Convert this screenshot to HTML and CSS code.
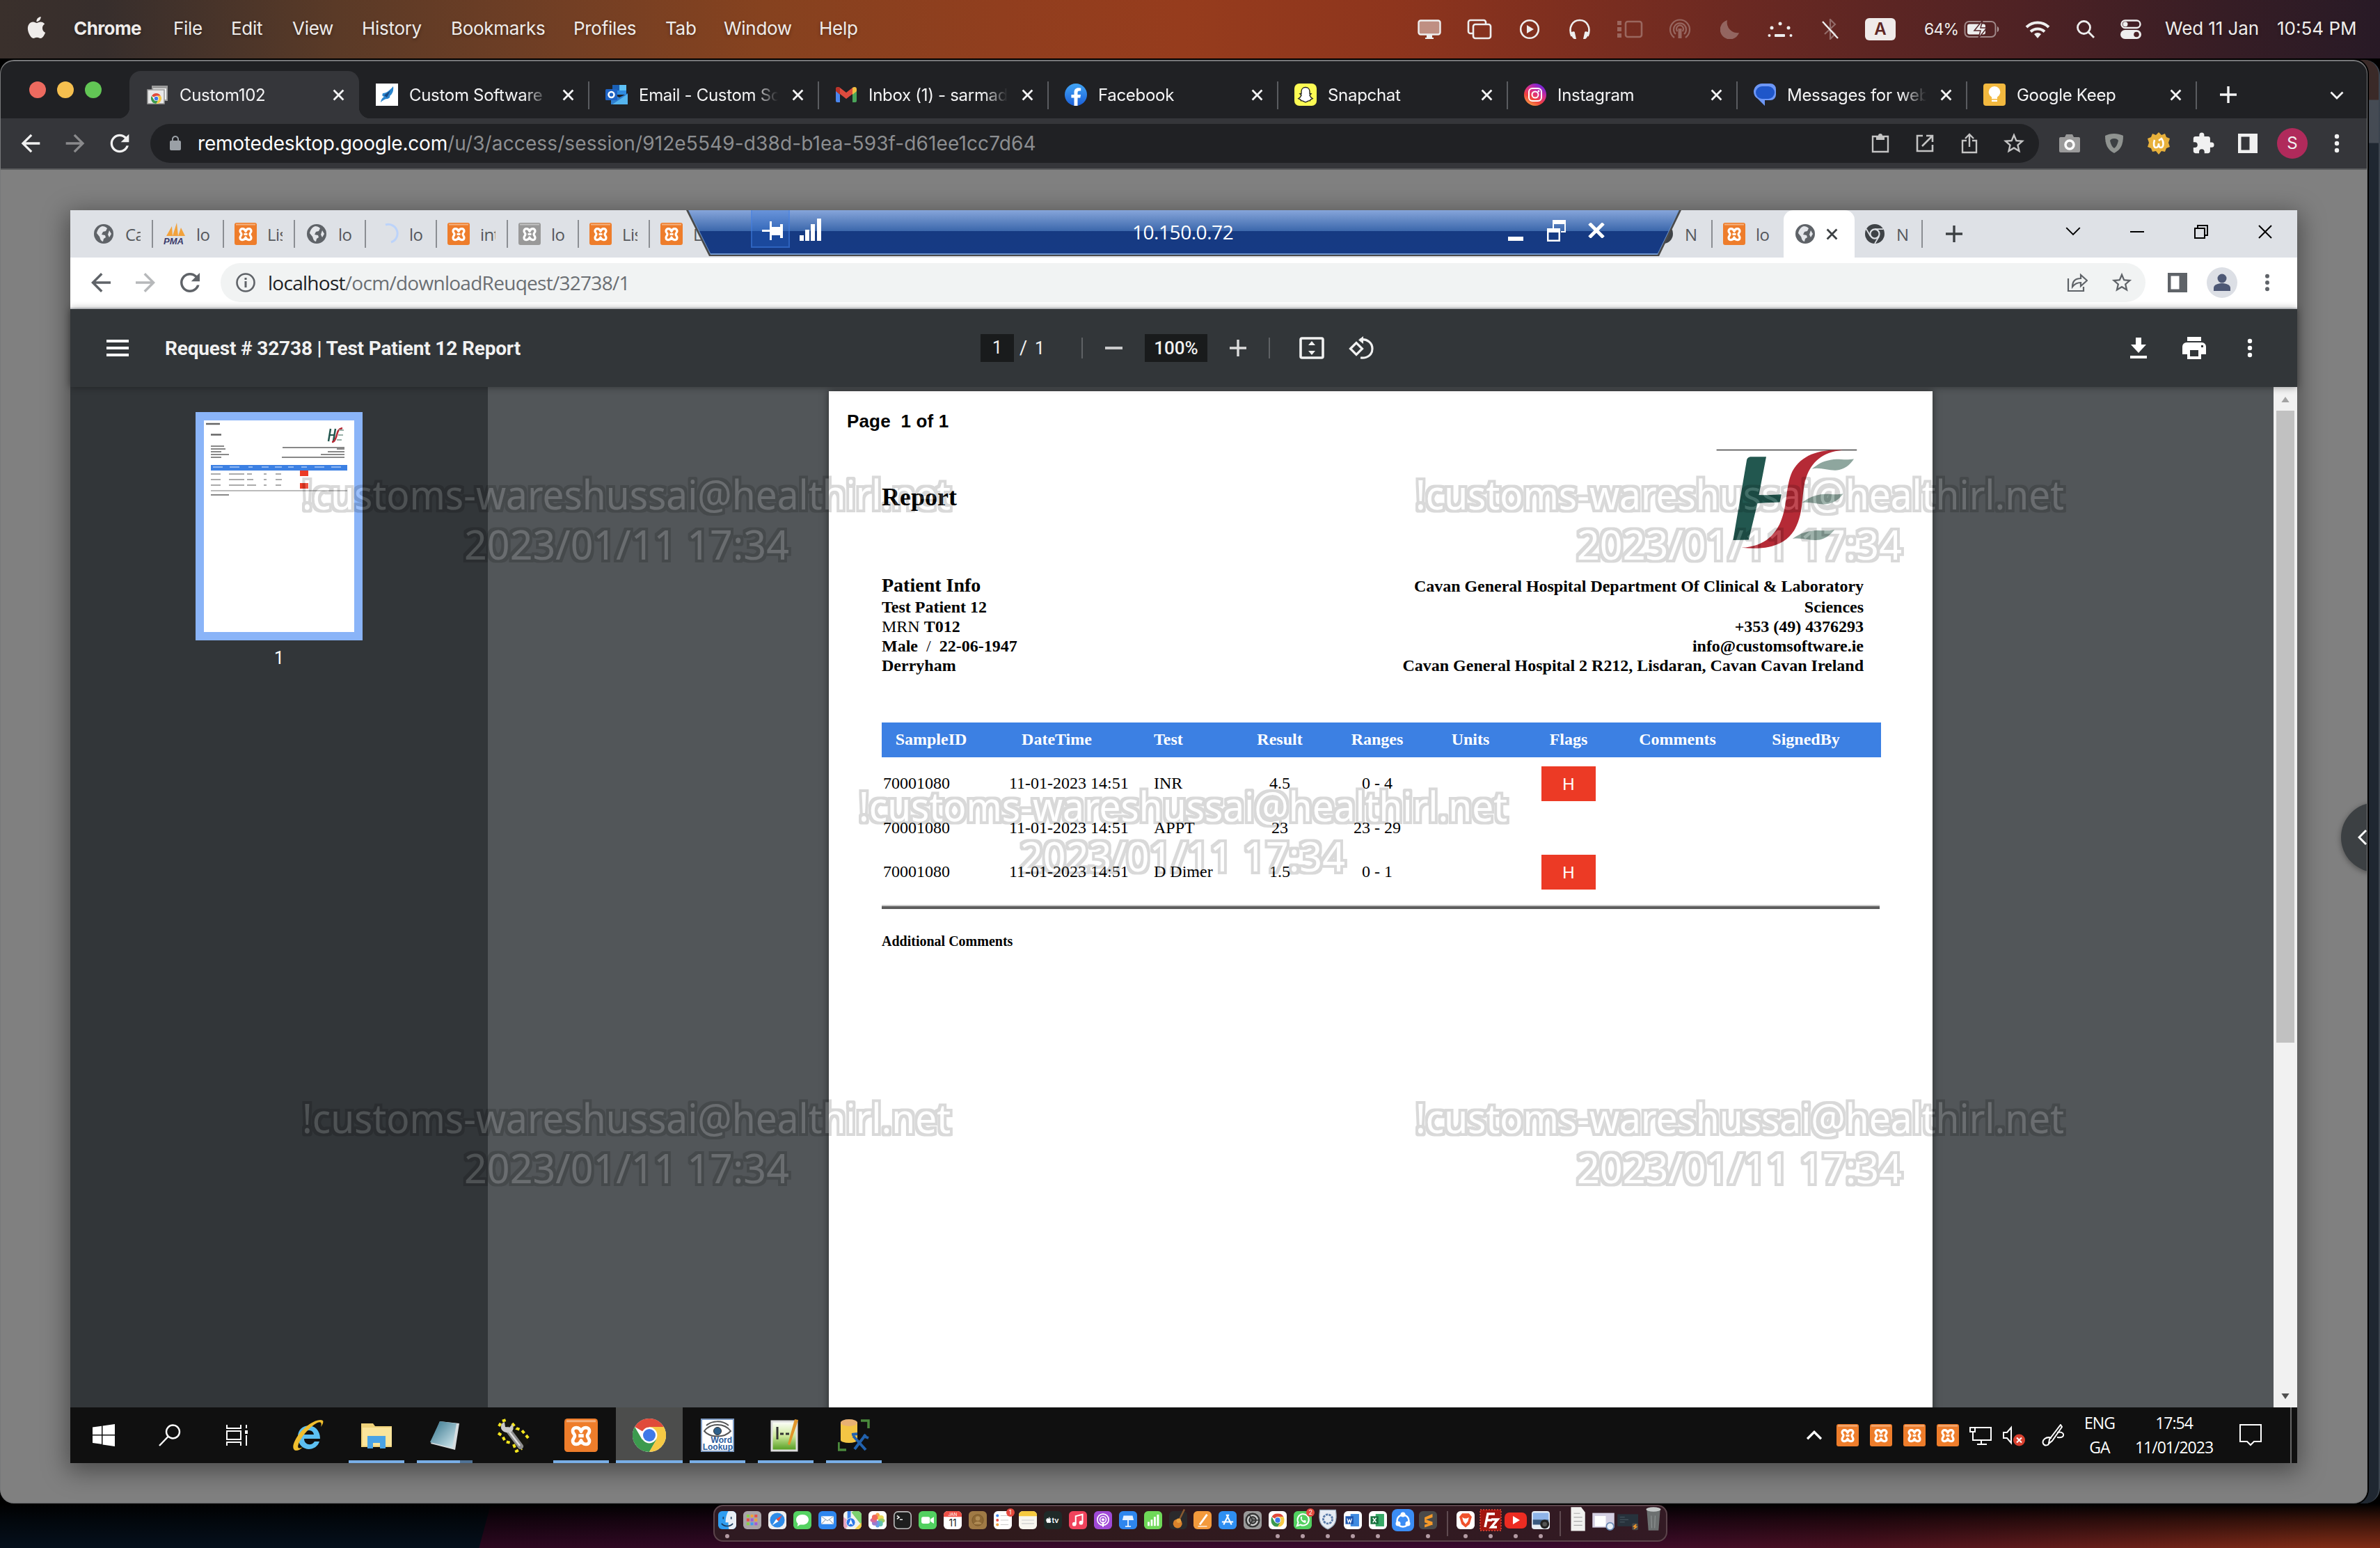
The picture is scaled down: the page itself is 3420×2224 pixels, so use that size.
FILE: index.html
```html
<!DOCTYPE html>
<html lang="en">
<head>
<meta charset="utf-8">
<title>Custom102</title>
<link rel="stylesheet" href="styles.css">
</head>
<body>
<svg class="defs" width="0" height="0">
  <defs>
    <linearGradient id="g-fb" x1="0" y1="0" x2="0" y2="1"><stop offset="0" stop-color="#41a5f5"/><stop offset="1" stop-color="#1b5fd8"/></linearGradient>
    <linearGradient id="g-ig" x1="0" y1="1" x2=".6" y2="0"><stop offset="0" stop-color="#fdc14a"/><stop offset=".4" stop-color="#f0433c"/><stop offset=".7" stop-color="#d62f8f"/><stop offset="1" stop-color="#7a25d8"/></linearGradient>
    <linearGradient id="g-np" x1="0" y1="0" x2="1" y2="1"><stop offset="0" stop-color="#2e7088"/><stop offset="1" stop-color="#d9edf3"/></linearGradient>
    <linearGradient id="g-npp" x1="0" y1="0" x2="0" y2="1"><stop offset="0" stop-color="#fff"/><stop offset=".5" stop-color="#cde89a"/><stop offset="1" stop-color="#4f9a1c"/></linearGradient>
    <filter id="emboss" filterUnits="userSpaceOnUse" x="101" y="302" width="3200" height="1800" color-interpolation-filters="sRGB">
      <feMorphology in="SourceAlpha" operator="dilate" radius="3.5" result="fat"/>
      <feComposite in="fat" in2="SourceAlpha" operator="out" result="ring"/>
      <feFlood flood-color="#000" flood-opacity=".15"/><feComposite in2="ring" operator="in" result="edge"/>
      <feFlood flood-color="#fff" flood-opacity=".14"/><feComposite in2="SourceAlpha" operator="in" result="core"/>
      <feMerge><feMergeNode in="edge"/><feMergeNode in="core"/></feMerge>
    </filter>
  </defs>
  <symbol id="back" viewBox="0 0 24 24"><path d="M20 11H7.83l5.59-5.59L12 4l-8 8 8 8 1.41-1.41L7.83 13H20z"/></symbol>
  <symbol id="fwd" viewBox="0 0 24 24"><path d="M4 11h12.17l-5.59-5.59L12 4l8 8-8 8-1.41-1.41L16.17 13H4z"/></symbol>
  <symbol id="reload" viewBox="0 0 24 24"><path d="M17.65 6.35C16.2 4.9 14.21 4 12 4c-4.42 0-7.99 3.58-7.99 8s3.57 8 7.99 8c3.73 0 6.84-2.55 7.73-6h-2.08c-.82 2.33-3.04 4-5.65 4-3.31 0-6-2.69-6-6s2.69-6 6-6c1.66 0 3.14.69 4.22 1.78L13 11h7V4z"/></symbol>
  <symbol id="lock" viewBox="0 0 24 24"><path d="M18 8h-1V6c0-2.76-2.24-5-5-5S7 3.24 7 6v2H6c-1.1 0-2 .9-2 2v10c0 1.1.9 2 2 2h12c1.1 0 2-.9 2-2V10c0-1.1-.9-2-2-2zM8.9 6c0-1.71 1.39-3.1 3.1-3.1s3.1 1.39 3.1 3.1v2H8.9z"/></symbol>
  <symbol id="star" viewBox="0 0 24 24"><path d="M22 9.24l-7.19-.62L12 2 9.19 8.63 2 9.24l5.46 4.73L5.82 21 12 17.27 18.18 21l-1.63-7.03zM12 15.4l-3.76 2.27 1-4.28-3.32-2.88 4.38-.38L12 6.1l1.71 4.04 4.38.38-3.32 2.88 1 4.28z"/></symbol>
  <symbol id="x" viewBox="0 0 16 16"><path d="M1.5 1.5l13 13M14.5 1.5l-13 13" fill="none" stroke="currentColor" stroke-width="2.6"/></symbol>
  <symbol id="xthin" viewBox="0 0 20 20"><path d="M1 1l18 18M19 1L1 19" fill="none" stroke="currentColor" stroke-width="2"/></symbol>
  <symbol id="plus" viewBox="0 0 24 24"><path d="M12 0v24M0 12h24" fill="none" stroke="currentColor" stroke-width="3.4"/></symbol>
  <symbol id="chev" viewBox="0 0 20 12"><path d="M1.5 1.5L10 10l8.500-8.500" fill="none" stroke="currentColor" stroke-width="2.800"/></symbol>
  <symbol id="chevthin" viewBox="0 0 20 12"><path d="M1 1l9 9 9-9" fill="none" stroke="currentColor" stroke-width="1.800"/></symbol>
  <symbol id="dots" viewBox="0 0 8 28"><circle cx="4" cy="4" r="3.200"/><circle cx="4" cy="14" r="3.200"/><circle cx="4" cy="24" r="3.200"/></symbol>
  <symbol id="apple" viewBox="0 0 24 24"><path d="M12.152 6.896c-.948 0-2.415-1.078-3.96-1.04-2.04.027-3.91 1.183-4.961 3.014-2.117 3.675-.546 9.103 1.519 12.09 1.013 1.454 2.208 3.09 3.792 3.039 1.52-.065 2.09-.987 3.935-.987 1.831 0 2.35.987 3.96.948 1.637-.026 2.676-1.48 3.676-2.948 1.156-1.688 1.636-3.325 1.662-3.415-.039-.013-3.182-1.221-3.22-4.857-.026-3.04 2.48-4.494 2.597-4.559-1.429-2.09-3.623-2.324-4.39-2.376-2-.156-3.675 1.09-4.61 1.09zM15.53 3.83c.843-1.012 1.4-2.427 1.245-3.83-1.207.052-2.662.805-3.532 1.818-.78.896-1.454 2.338-1.273 3.714 1.338.104 2.715-.688 3.559-1.701"/></symbol>
  <symbol id="xampp" viewBox="0 0 32 32"><rect width="32" height="32" rx="3" class="xb"/><rect x="2" y="1.500" width="28" height="2" fill="#fff" opacity=".4"/><path d="M16 12.500C14.500 7.500 8 7.500 8 12c0 2.500 2 2.500 2 4.500S8 19 8 21.500c0 4.500 6.500 4 8-.500 1.500 4.500 8 5 8 .500 0-2.500-2-3-2-5s2-2 2-4.500c0-4.500-6.500-4.500-8 .500zM13.500 16.500h5" fill="none" stroke="#fff" stroke-width="3.200" stroke-linejoin="round"/></symbol>
  <symbol id="globe" viewBox="0 0 28 28"><circle cx="14" cy="14" r="14" class="gb"/><path d="M12 3c3 0 5 1 7 3l-2 4-4 1-2 4 5 1 1 3-3 2-1 4c-4-1-4-5-5-7L4 13c1-5 4-9 8-10zM22 9l3 5-3 5-2-4z" class="gl"/></symbol>
  <symbol id="chrome" viewBox="0 0 32 32"><circle cx="16" cy="16" r="16" fill="#fff"/><path d="M16 16L2.140 8A16 16 0 0 1 29.860 8H16z" fill="#e04a3a"/><path d="M2.140 8A16 16 0 0 0 16 32l7-12-7-4-6.900 4z" fill="#3c9a4e"/><path d="M29.860 8A16 16 0 0 1 16 32l6.900-12L16 8z" fill="#f6c944"/><circle cx="16" cy="16" r="7.600" fill="#fff"/><circle cx="16" cy="16" r="6" fill="#3f79e8"/></symbol>
  <symbol id="chromeg" viewBox="0 0 32 32"><circle cx="16" cy="16" r="16" fill="#3f4347"/><path d="M16 8h14M9 20L2 8M23 20l-7 12" stroke="#dee1e6" stroke-width="2"/><circle cx="16" cy="16" r="7.500" fill="#3f4347" stroke="#dee1e6" stroke-width="2.500"/></symbol>
  <symbol id="side" viewBox="0 0 28 28"><path d="M0 0h28v28H0zM4.500 4.500v19h12v-19z" fill-rule="evenodd"/></symbol>
</svg>

<header class="menubar">
  <svg class="apple"><use href="#apple"/></svg>
  <nav class="menus"><b>Chrome</b><span>File</span><span>Edit</span><span>View</span><span>History</span><span>Bookmarks</span><span>Profiles</span><span>Tab</span><span>Window</span><span>Help</span></nav>
  <div class="status">
    <i><svg width="36" height="30" viewBox="0 0 36 30"><rect x="2.500" y="2.500" width="31" height="20" rx="3" fill="#fff" fill-opacity=".45" stroke="#eee" stroke-width="2.400"/><path d="M14 23h8v4h2v2H12v-2h2z" fill="#eee"/></svg></i>
    <i><svg width="36" height="30" viewBox="0 0 36 30" fill="none" stroke="#eee" stroke-width="2.600"><path d="M8 21H5a3 3 0 0 1-3-3V5a3 3 0 0 1 3-3h19a3 3 0 0 1 3 3v2"/><rect x="9" y="8" width="25" height="20" rx="3"/></svg></i>
    <i><svg width="30" height="30" viewBox="0 0 30 30"><circle cx="15" cy="15" r="12.800" fill="none" stroke="#eee" stroke-width="2.600"/><path d="M11 9l10 6-10 6z" fill="#eee"/></svg></i>
    <i><svg width="30" height="30" viewBox="0 0 30 30"><path d="M3.500 25C-2 12 5 2 15 2s17 10 11.500 23" fill="none" stroke="#eee" stroke-width="2.600"/><path d="M3 19c3-1 5-1 5 1l2 9H7c-3-2-5-6-4-10zM27 19c-3-1-5-1-5 1l-2 9h3c3-2 5-6 4-10z" fill="#eee"/></svg></i>
    <i class="dim"><svg width="38" height="26" viewBox="0 0 38 26"><rect x="13" y="2" width="23" height="22" rx="3" fill="none" stroke="#eee" stroke-width="2.600"/><path d="M1 1h6v6H1zM1 10h6v6H1zM1 19h6v6H1z" fill="#eee"/></svg></i>
    <i class="dim"><svg width="32" height="30" viewBox="0 0 32 30" fill="none" stroke="#eee" stroke-width="2.200"><path d="M8 27a14 14 0 1 1 16 0M10 22a9 9 0 1 1 12 0M12.500 18a5 5 0 1 1 7 0"/><path d="M16 14v14" stroke-width="5"/></svg></i>
    <i class="dim"><svg width="28" height="28" viewBox="0 0 28 28"><path d="M10 1a14 14 0 1 0 17 18A15 15 0 0 1 10 1z" fill="#eee"/></svg></i>
    <i><svg width="36" height="24" viewBox="0 0 36 24" fill="#eee"><circle cx="18" cy="4" r="2.500"/><circle cx="6" cy="10" r="2.500"/><circle cx="30" cy="10" r="2.500"/><circle cx="2.500" cy="21" r="2"/><circle cx="33.500" cy="21" r="2"/><rect x="10" y="19" width="15" height="4" rx="1"/></svg></i>
    <i><svg width="26" height="30" viewBox="0 0 26 30" fill="none"><path d="M5 8l15 14-7 7V1l7 7L5 22" stroke="#eee" stroke-opacity=".35" stroke-width="2.200"/><path d="M2 4l22 24" stroke="#eee" stroke-width="2.400"/></svg></i>
    <i><span class="kbd">A</span></i>
    <span class="pct">64%</span>
    <svg class="batt" width="52" height="26" viewBox="0 0 52 26"><rect x="1.500" y="2" width="44" height="22" rx="6" fill="none" stroke="#eee" stroke-opacity=".5" stroke-width="2"/><path d="M48 9c3 1 3 7 0 8z" fill="#eee" fill-opacity=".6"/><rect x="5" y="5.500" width="26" height="15" rx="3" fill="#eee"/><path d="M27 0L15 15h9l-3 11 12-15h-9z" fill="#eee" stroke="#54262a" stroke-width="1.500"/></svg>
    <svg class="wifi" width="36" height="27" viewBox="0 0 36 27" fill="none" stroke="#eee" stroke-width="4"><path d="M2 10a23 23 0 0 1 32 0M8 16.500a14.500 14.500 0 0 1 20 0"/><path d="M18 26l-5-6a7 7 0 0 1 10 0z" fill="#eee" stroke="none"/></svg>
    <svg class="find" width="28" height="28" viewBox="0 0 28 28" fill="none" stroke="#eee" stroke-width="2.800"><circle cx="11.500" cy="11.500" r="9"/><path d="M18 18l8 8"/></svg>
    <svg class="cc" width="30" height="28" viewBox="0 0 30 28"><rect x="1.500" y="1.500" width="27" height="10.500" rx="5.200" fill="none" stroke="#eee" stroke-width="2.400"/><circle cx="7" cy="6.700" r="3.500" fill="#eee"/><rect y="15" width="30" height="13" rx="6.500" fill="#eee"/><circle cx="23" cy="21.500" r="3.800" fill="#4a2226"/></svg>
    <span class="date">Wed 11 Jan</span><span class="time">10:54 PM</span>
  </div>
</header>

<div class="behind"></div>
<main class="win">
  <div class="tabs">
    <div class="lights"><i class="r"></i><i class="y"></i><i class="g"></i></div>
    <div class="tab on"><svg class="fav" viewBox="0 0 32 32"><path d="M8 3h23v22H8z" fill="#9b9b9b"/><path d="M10 7h19v16H10z" fill="#eee"/><path d="M2 9h24v20H2z" fill="#e8e8e8" stroke="#999" stroke-width="1.500"/><svg x="7" y="14" width="15" height="15"><use href="#chrome"/></svg></svg><span>Custom102</span><svg class="x"><use href="#x"/></svg></div>
    <div class="tab"><svg class="fav" viewBox="0 0 32 32"><path d="M0 0h32v32H0z" fill="#fff"/><path d="M7 27c1-5 3-7 5-8-3-1-3-2-2-5 5 0 10-4 15-10 1 6-1 11-5 14 1 1 0 3-3 4-4 0-7 2-10 5z" fill="#2b86cf"/><path d="M12 17l9-7-5 10z" fill="#174a86"/></svg><span>Custom Software</span><svg class="x"><use href="#x"/></svg></div>
    <div class="tab"><svg class="fav" viewBox="0 0 32 32"><path d="M10 2h20v14H10z" fill="#2f8be0"/><path d="M20 2h10v8H20z" fill="#5ec1f5"/><path d="M10 2h10v8H10z" fill="#1a5fb4"/><path d="M8 14l12 6 12-6v16H8z" fill="#2f7fd0"/><path d="M32 15v15H10z" fill="#55b4ee"/><rect y="8" width="17" height="16" rx="1.500" fill="#1f63c4"/><circle cx="8.500" cy="16" r="4" fill="none" stroke="#fff" stroke-width="2.500"/></svg><span>Email - Custom So</span><svg class="x"><use href="#x"/></svg></div>
    <div class="tab"><svg class="fav" viewBox="0 0 32 32"><path d="M1 8h6v19H3a2 2 0 0 1-2-2z" fill="#4b86ee"/><path d="M25 8h6v17a2 2 0 0 1-2 2h-4z" fill="#4aa55a"/><path d="M1 8c0-3 3-4 6-2l9 7 9-7v9l-9 7-9-7-6-5z" fill="#dd4b3e"/><path d="M25 6c3-2 6-1 6 2v3l-6 5z" fill="#f2bd42"/><path d="M1 8c0-3 3-4 6-2v10l-6-5z" fill="#b83229"/></svg><span>Inbox (1) - sarmad</span><svg class="x"><use href="#x"/></svg></div>
    <div class="tab"><svg class="fav" viewBox="0 0 32 32"><circle cx="16" cy="16" r="16" fill="url(#g-fb)"/><path d="M13.500 32V20.600H9.400V16h4.100v-3.500c0-4 2.400-6.300 6.100-6.300 1.800 0 3.600.3 3.600.3v4h-2c-2 0-2.700 1.200-2.700 2.500v3h4.500l-.7 4.600h-3.800V32z" fill="#fff"/></svg><span>Facebook</span><svg class="x"><use href="#x"/></svg></div>
    <div class="tab"><svg class="fav" viewBox="0 0 32 32"><rect width="32" height="32" rx="7" fill="#fdfb54"/><path d="M16 5.500c4 0 6 3 6 6v3l2 .2-2 2c1 3 2 4 4 5l-3 1.500-.5 1.500c-3-.5-4 2-6.500 2s-3.500-2.500-6.500-2L9 23.200l-3-1.500c2-1 3-2 4-5l-2-2 2-.2v-3c0-3 2-6 6-6z" fill="#fff" stroke="#222" stroke-width="1.400"/></svg><span>Snapchat</span><svg class="x"><use href="#x"/></svg></div>
    <div class="tab"><svg class="fav" viewBox="0 0 32 32"><circle cx="16" cy="16" r="16" fill="url(#g-ig)"/><g fill="none" stroke="#fff" stroke-width="2"><rect x="7" y="7" width="18" height="18" rx="5"/><circle cx="16" cy="16" r="4.500"/></g><circle cx="21" cy="11" r="1.400" fill="#fff"/></svg><span>Instagram</span><svg class="x"><use href="#x"/></svg></div>
    <div class="tab"><svg class="fav" viewBox="0 0 32 32"><path d="M12 0h12a8 8 0 0 1 8 8v8a8 8 0 0 1-8 8h-8v8L6 22A12 12 0 0 1 0 12 12 12 0 0 1 12 0z" fill="#6d97f6"/><rect x="3" y="4" width="27" height="18" rx="9" fill="#1f56c9"/></svg><span>Messages for web</span><svg class="x"><use href="#x"/></svg></div>
    <div class="tab"><svg class="fav" viewBox="0 0 32 32"><rect width="32" height="32" rx="4" fill="#f3b93f"/><path d="M12 22v-2.500a8.300 8.300 0 1 1 8 0V22zM12 23.500h8V26h-8z" fill="#fff"/></svg><span>Google Keep</span><svg class="x"><use href="#x"/></svg></div>
    <svg class="newtab"><use href="#plus"/></svg>
    <svg class="tabmenu"><use href="#chev"/></svg>
  </div>
  <div class="tools">
    <div class="nav"><svg><use href="#back"/></svg><svg class="off"><use href="#fwd"/></svg><svg><use href="#reload"/></svg></div>
    <div class="omni">
      <svg class="lock"><use href="#lock"/></svg>
      <span class="url">remotedesktop.google.com<em>/u/3/access/session/912e5549-d38d-b1ea-593f-d61ee1cc7d64</em></span>
      <div class="omni-i">
        <i><svg width="26" height="28" viewBox="0 0 26 28"><path d="M2 4h22v22H2z" fill="none" stroke="#c4c4c4" stroke-width="2.400"/><path d="M7 3h3a3 3 0 0 1 6 0h3v6H7z" fill="#c4c4c4"/></svg></i>
        <i><svg width="26" height="28" viewBox="0 0 26 28" fill="none" stroke="#c4c4c4" stroke-width="2.600"><path d="M10 3H2v22h22v-9M15 3h9v9M24 3L9 18"/></svg></i>
        <i><svg width="24" height="32" viewBox="0 0 24 32" fill="none" stroke="#c4c4c4" stroke-width="2.400"><path d="M8 12H2v17h20V12h-6M12 21V3M6 9l6-6 6 6"/></svg></i>
        <i><svg width="36" height="36"><use href="#star"/></svg></i>
      </div>
    </div>
    <div class="exts">
      <i><svg width="32" height="28" viewBox="0 0 32 28"><path d="M3 5h6l2-4h9l2 4h7a2 2 0 0 1 2 2v18a2 2 0 0 1-2 2H3a2 2 0 0 1-2-2V7a2 2 0 0 1 2-2z" fill="#9a9a9a"/><circle cx="16" cy="16" r="6" fill="none" stroke="#fff" stroke-width="3.500"/></svg></i>
      <i><svg width="28" height="30" viewBox="0 0 28 30"><path d="M14 1c5 0 9 1 13 3 0 12-3 20-13 25C4 24 1 16 1 4c4-2 8-3 13-3z" fill="#8f9390"/><path d="M14 8c3 0 5 1 6 3-1 5-3 9-6 11-3-2-5-6-6-11 1-2 3-3 6-3z" fill="#3c4043"/></svg></i>
      <i><svg width="32" height="32" viewBox="0 0 32 32"><path d="M16 0l4 4 5-2 2 5 5 2-2 6 2 6-5 2-2 5-5-1-4 5-4-5-5 1-2-5-5-2 2-6-2-6 5-2 2-5 5 2z" fill="#e8b13c"/><path d="M10 11c-2 6-1 11 2 11 3 0 4-3 4-6 0 3 1 6 3 6 4 0 5-8 1-13l-4 3" fill="none" stroke="#fff" stroke-width="2.600"/></svg></i>
      <i><svg width="34" height="34" viewBox="0 0 24 24" fill="#f1f1f1"><path d="M20.500 11H19V7c0-1.100-.9-2-2-2h-4V3.500a2.500 2.500 0 0 0-5 0V5H4c-1.100 0-2 .9-2 2v3.800h1.500a2.700 2.700 0 0 1 0 5.400H2V20c0 1.100.9 2 2 2h3.800v-1.500a2.700 2.700 0 0 1 5.400 0V22H17c1.100 0 2-.9 2-2v-4h1.500a2.500 2.500 0 0 0 0-5z"/></svg></i>
      <i><svg width="28" height="28" fill="#f1f1f1"><use href="#side"/></svg></i>
      <i><b class="me">S</b></i>
      <i><svg width="8" height="28" fill="#f1f1f1"><use href="#dots"/></svg></i>
    </div>
  </div>

  <div class="stage">
  <section class="remote">
    <div class="rtabs">
      <div class="rtab"><svg class="gi"><use href="#globe"/></svg><span>Ca</span></div>
      <div class="rtab"><svg viewBox="0 0 32 32"><path d="M4 19L12 5l1 14zM13 19L19 0l2 19zM21 19l4-12 6 12z" fill="#f2a23c"/><text x="0" y="31" class="pma">PMA</text></svg><span>lo</span></div>
      <div class="rtab"><svg class="or"><use href="#xampp"/></svg><span>Lis</span></div>
      <div class="rtab"><svg class="gi"><use href="#globe"/></svg><span>lo</span></div>
      <div class="rtab"><svg viewBox="0 0 32 32"><path d="M13 3a13 13 0 0 1 8 25" fill="none" stroke="#bcd3fa" stroke-width="3"/></svg><span>lo</span></div>
      <div class="rtab"><svg class="or"><use href="#xampp"/></svg><span>int</span></div>
      <div class="rtab"><svg class="gr"><use href="#xampp"/></svg><span>lo</span></div>
      <div class="rtab"><svg class="or"><use href="#xampp"/></svg><span>Lis</span></div>
      <div class="rtab nosep"><svg class="or"><use href="#xampp"/></svg><span>L</span></div>
      <div class="rtab later"><svg class="gi"><use href="#chromeg"/></svg><span>N</span></div>
      <div class="rtab nosep"><svg class="or"><use href="#xampp"/></svg><span>lo</span></div>
      <div class="rtab cur"><svg class="gi"><use href="#globe"/></svg><svg class="cx"><use href="#x"/></svg></div>
      <div class="rtab last"><svg class="gi"><use href="#chromeg"/></svg><span>N</span></div>
      <svg class="rplus"><use href="#plus"/></svg>
      <div class="wbtns"><i><svg width="22" height="13"><use href="#chevthin"/></svg></i><i><b class="dash"></b></i><i><svg width="20" height="20" viewBox="0 0 20 20" fill="none" stroke="#000" stroke-width="2"><path d="M1 5h14v14H1zM5 5V1h14v14h-4"/></svg></i><i><svg width="20" height="20"><use href="#xthin"/></svg></i></div>
    </div>
    <div class="conn">
      <svg class="conn-bg" viewBox="0 0 1430 66" preserveAspectRatio="none"><defs><linearGradient id="cb" x1="0" y1="0" x2="0" y2="1"><stop offset="0" stop-color="#86a5da"/><stop offset=".48" stop-color="#3c68ac"/><stop offset=".485" stop-color="#163a82"/><stop offset="1" stop-color="#163a84"/></linearGradient></defs><path d="M0 0h1430l-32 66H33z" fill="#4a4a4a"/><path d="M3 0h1424l-31 64H35z" fill="#6f97cf"/><path d="M4 0h1422l-30 62H35z" fill="url(#cb)"/></svg>
      <i class="pin"><svg width="32" height="28" viewBox="0 0 32 28" fill="#fff"><path d="M0 12h12v3H0zM11 0h3v27h-3zM14 8h12v12H14zM26 4h4v20h-4z"/></svg></i>
      <svg class="sig" width="32" height="32" viewBox="0 0 32 32" fill="#fff"><path d="M0 24h6v8H0zM8 16h6v16H8zM16 8h6v24h-6zM25 0h6v32h-6z"/></svg>
      <span>10.150.0.72</span>
      <div class="conn-b"><b></b><svg width="28" height="32" viewBox="0 0 28 32" fill="#fff"><path d="M8 0h19v18h-7v-2h5V6H10v6H8zM0 12h19v19H0zM2.500 18v10.500h14V18z" fill-rule="evenodd"/></svg><svg width="26" height="22" viewBox="0 0 26 22"><path d="M3 1l20 20M23 1L3 21" stroke="#fff" stroke-width="5"/></svg></div>
    </div>
    <div class="rtools">
      <div class="nav"><svg><use href="#back"/></svg><svg class="off"><use href="#fwd"/></svg><svg><use href="#reload"/></svg></div>
      <div class="romni"><svg class="info" viewBox="0 0 28 28"><circle cx="14" cy="14" r="12.500" fill="none" stroke="#5f6368" stroke-width="2.600"/><path d="M12.500 12h3v9h-3zM12.500 7h3v3h-3z"/></svg><span>localhost<em>/ocm/downloadReuqest/32738/1</em></span>
        <svg class="rshare" viewBox="0 0 30 28" fill="none" stroke="#5f6368" stroke-width="2.200"><path d="M2 8v18h22v-6M8 20c0-8 4-12 12-12V3l9 8-9 8v-5c-6 0-9 2-12 6z"/></svg><svg class="rstar"><use href="#star"/></svg></div>
      <svg class="rside"><use href="#side"/></svg>
      <svg class="ruser" viewBox="0 0 44 44"><circle cx="22" cy="22" r="22" fill="#dcdfe5"/><circle cx="22" cy="16" r="6.500" fill="#4d5875"/><path d="M10 34v-4c0-5 6-7 12-7s12 2 12 7v4z" fill="#4d5875"/></svg>
      <svg class="rdots"><use href="#dots"/></svg>
    </div>
    <div class="pdfbar">
      <div class="burger"><i></i><i></i><i></i></div>
      <b class="ptitle">Request # 32738 | Test Patient 12 Report</b>
      <span class="pbox pnum">1</span><span class="pof">/</span><span class="ptot">1</span>
      <i class="psep s1"></i><i class="pminus"></i><span class="pbox pzoom">100%</span>
      <svg class="pplus"><use href="#plus"/></svg><i class="psep s2"></i>
      <svg class="pfit" viewBox="0 0 36 32"><rect x="2" y="2" width="32" height="28" rx="2" fill="none" stroke="#f1f1f1" stroke-width="3.600"/><path d="M18 6l5 6H13zM18 26l5-6H13z" fill="#f1f1f1"/></svg>
      <svg class="prot" viewBox="0 0 36 34" fill="none" stroke="#f1f1f1" stroke-width="3.200"><path d="M2.500 18l8.500-8.500 8.500 8.500-8.500 8.500zM16 5c11-2 18 5 18 13S28 32 17 31"/><path d="M21 0v11l-7-5.500z" fill="#f1f1f1" stroke="none"/></svg>
      <div class="pact"><svg width="24" height="30" viewBox="0 0 24 30" fill="#fff"><path d="M8 0h8v10h7L12 22 1 10h7zM0 26h24v4H0z"/></svg>
      <svg width="34" height="32" viewBox="0 0 34 32" fill="#fff"><path d="M7 0h20v6H7zM6 8h22a6 6 0 0 1 6 6v11h-7v7H7v-7H0V14a6 6 0 0 1 6-6zM11 19v9h12v-9zM27 12v3h3v-3z" fill-rule="evenodd"/></svg>
      <svg width="8" height="28" fill="#fff"><use href="#dots"/></svg></div>
    </div>
    <div class="pdf">
      <aside class="side">
        <svg class="thumb" viewBox="293 604 216 304"><path d="M293 604h216v304H293z" fill="#fff"/>
          <g fill="none" stroke="#888" stroke-width="1.800"><path d="M296 609h20M303 624.500h15" stroke-width="2.400" stroke="#666"/><path d="M303 641h19M303 645h21M303 649h15M303 653h26M303 657h15M406 643h89M484 645h11M471 649h24M461 653h34M405 657h90M303 711h26"/><path d="M303 681h14M329 681h22M355 681h7M303 689h14M329 689h22M355 689h9M303 697h14M329 697h22M355 697h13M379 681h4M379 689h4M379 697h4M396 681h8M396 689h9M396 697h8" stroke-opacity=".7"/><path d="M303 705h196" stroke="#bbb"/></g>
          <path d="M303 668h196v8H303z" fill="#3c80e3"/><path d="M306 671h14M330 671h14M357 671h6M376 671h10M395 671h10M414 671h8M433 671h8M452 671h14M476 671h14" stroke="#a9c8f6" stroke-width="1.600"/>
          <path d="M431 676h12v8h-12zM431 694h12v8h-12z" fill="#ec3a25"/>
          <path d="M475 616l-3 18M482 616l-3 18" stroke="#22564e" stroke-width="2.500"/><path d="M474 625h6" stroke="#22564e" stroke-width="2"/><path d="M492 615c-8 2-7 8-9 13s-3 7-6 7" fill="none" stroke="#b52a36" stroke-width="2.500"/><path d="M487 618h7M486 625h7M484 632h7" stroke="#9ab0a8" stroke-width="2"/></svg>
        <span>1</span>
      </aside>
      <div class="view">
        <article class="page">
          <p class="pageno">Page &nbsp;1 of 1</p>
          <div class="top"><h1>Report</h1>
            <svg class="hse" viewBox="800 155 300 275" preserveAspectRatio="none"><path d="M808 160h288v3H808z" fill="#444"/><path d="M880 180h30l-15 102c15 2 30 0 46-1l-3 21c-15 2-30 0-46 3l-18 98-32 1 28-215c1-6 4-9 10-9z" fill="#22574f"/><path d="M1067 162c-50-4-90 15-106 65-12 42-7 90-24 135-14 36-38 60-78 62 55 8 92-8 110-50 20-48 12-100 24-142 10-35 30-65 74-70z" fill="#b52a36"/><path d="M1090 186c-20 4-32-2-48 2-18 4-26 12-38 24 18-6 38 8 56 3 16-5 24-18 30-29zM1068 279c-20 5-30-2-46 2-18 4-28 12-38 22 18-4 36 8 54 3 16-5 24-16 30-27zM1050 376c-20 5-32-1-48 3-18 4-28 12-38 21 20-4 38 7 56 3 14-5 24-16 30-27z" fill="#8ea69e"/></svg>
          </div>
          <div class="info2">
            <div class="pt"><h2>Patient Info</h2><b>Test Patient 12</b><div>MRN <b>T012</b></div><div><b>Male</b>&nbsp; / &nbsp;<b>22-06-1947</b></div><b>Derryham</b></div>
            <div class="hosp"><b class="first">Cavan General Hospital Department Of Clinical &amp; Laboratory</b><b>Sciences</b><b>+353 (49) 4376293</b><b>info@customsoftware.ie</b><b>Cavan General Hospital 2 R212, Lisdaran, Cavan Cavan Ireland</b></div>
          </div>
          <div class="row head"><b>SampleID</b><b>DateTime</b><b>Test</b><b>Result</b><b>Ranges</b><b>Units</b><b>Flags</b><b>Comments</b><b>SignedBy</b></div>
          <div class="rows">
            <div class="row"><span>70001080</span><span>11-01-2023 14:51</span><span>INR</span><span>4.5</span><span>0 - 4</span><span></span><span><i class="flag">H</i></span></div>
            <div class="row"><span>70001080</span><span>11-01-2023 14:51</span><span>APPT</span><span>23</span><span>23 - 29</span><span></span><span></span></div>
            <div class="row"><span>70001080</span><span>11-01-2023 14:51</span><span>D Dimer</span><span>1.5</span><span>0 - 1</span><span></span><span><i class="flag">H</i></span></div>
          </div>
          <hr>
          <b class="addl">Additional Comments</b>
        </article>
      </div>
      <div class="sbar"><svg viewBox="0 0 14 10"><path d="M7 0l7 10H0z" fill="#a3a3a3"/></svg><i></i><svg viewBox="0 0 14 10"><path d="M7 10L0 0h14z" fill="#505050"/></svg></div>
    </div>
    <div class="taskbar">
      <i class="w"><svg width="32" height="32" viewBox="0 0 32 32" fill="#fff"><path d="M0 4.500L13 2.700V15H0zM14.500 2.500L32 0v15H14.500zM0 16.500h13v12.300L0 27zM14.500 16.500H32V32l-17.500-2.500z"/></svg></i>
      <i class="w"><svg width="32" height="32" viewBox="0 0 32 32" fill="none" stroke="#fff" stroke-width="2.400"><circle cx="20.500" cy="11" r="9.500"/><path d="M13.500 18L1 31"/></svg></i>
      <i class="w"><svg width="32" height="30" viewBox="0 0 32 30" fill="none" stroke="#fff" stroke-width="2"><path d="M1 0v5h20V0M1 9h20v12H1zM1 30v-5h20v5M29 0v5M29 15v15"/><path d="M27 8h4v5h-4z" fill="#fff" stroke="none"/></svg></i>
      <i><svg width="46" height="46" viewBox="0 0 46 46"><path d="M40 28H17c0 9 11 11 15 4h7C34 48 8 47 8 25 8 4 40 3 40 28zM17 22h14c-1-8-13-8-14 0z" fill="#5cc0f2" fill-rule="evenodd"/><path d="M44 2C37-2 20 8 10 21S-1 44 5 45c4 0 7-2 10-5-6 3-9 2-5-7S26 10 36 5c5-2 7 0 5 6 3-4 4-7 3-9z" fill="#f0be2e"/></svg></i>
      <i class="run"><svg width="44" height="38" viewBox="0 0 44 38"><path d="M0 2h17l3 4h24v30H0z" fill="#efd27a"/><path d="M2 8h42v26H2z" fill="#fbe59c"/><path d="M9 20h26v18h-8v-8H17v8H9z" fill="#4aa3e6"/></svg></i>
      <i class="run two"><svg width="44" height="44" viewBox="0 0 44 44"><path d="M15 2l28 3-6 38-35-9z" fill="#d6dcdf"/><path d="M15 2l24 3-6 35-32-8z" fill="url(#g-np)"/></svg></i>
      <i><svg width="50" height="50" viewBox="0 0 50 50"><path d="M4 10L16 2l30 28 2 6-16 12-6-4z" fill="#15150f"/><path d="M5 12l4-7 9-3M24 8l6 7 8 3 10 12M4 22l6 4 4 8 8 2M26 38l4 10 8-4" fill="none" stroke="#f5e61e" stroke-width="4" stroke-dasharray="5 4"/><path d="M18 17l18 24" stroke="#8e8e8e" stroke-width="8" stroke-linecap="round"/><path d="M19 19l16 21" stroke="#ddd" stroke-width="2.500"/><path d="M13 6l1 7 6 1 4-5c3 5 2 11-4 12-7 1-13-3-12-9 0-3 2-5 5-6z" fill="#c9c9c9"/></svg></i>
      <i class="run or"><svg width="48" height="48"><use href="#xampp"/></svg></i>
      <i class="run act"><svg width="48" height="48"><use href="#chrome"/></svg></i>
      <i class="run"><svg width="48" height="48" viewBox="0 0 48 48"><rect x="1" y="1" width="46" height="46" fill="#fff" stroke="#7f9cc4" stroke-width="2"/><path d="M5 18c9-12 29-12 38 0-9 10-29 10-38 0zM8 10c8-7 22-8 32 0" fill="none" stroke="#555" stroke-width="2"/><circle cx="24" cy="18" r="5.500" fill="#2d5f8a" stroke="#333"/><text x="45" y="35" class="wl">Word</text><text x="46" y="45" class="wl">Lookup</text></svg></i>
      <i class="run"><svg width="44" height="48" viewBox="0 0 44 48"><path d="M2 4h36v42H2z" fill="url(#g-npp)" stroke="#ddd" stroke-width="3"/><path d="M10 12v18M14 22h5M22 22h5" stroke="#333" stroke-width="3"/><path d="M40 2l-12 36 -3-1L35 1z" fill="#e0952b"/></svg></i>
      <i class="run"><svg width="46" height="46" viewBox="0 0 46 46"><path d="M4 4h24v26H4z" fill="#f3c544"/><ellipse cx="16" cy="5" rx="12" ry="5" fill="#e8b173"/><ellipse cx="16" cy="30" rx="12" ry="4" fill="#f3c544"/><path d="M33 2h11v11M1 33v11h11" fill="none" stroke="#4b8a3c" stroke-width="3.500"/><path d="M22 24l18 20M40 22L24 43M20 22l8-1M36 24l8 3" stroke="#2262ae" stroke-width="4"/></svg></i>
      <div class="tray">
        <svg class="up"><use href="#chev"/></svg>
        <svg class="or tx"><use href="#xampp"/></svg><svg class="or tx"><use href="#xampp"/></svg><svg class="or tx"><use href="#xampp"/></svg><svg class="or tx last"><use href="#xampp"/></svg>
        <svg class="tx" viewBox="0 0 32 32" fill="none" stroke="#fff" stroke-width="2"><path d="M9 5h22v18H5V12M1 5h7v6H1zM17 23v6M11 29h14"/></svg>
        <svg class="tx" viewBox="0 0 32 32"><path d="M1 12h5l6-7v22l-6-7H1z" fill="none" stroke="#fff" stroke-width="2"/><circle cx="23.500" cy="23" r="8.500" fill="#d9402f"/><path d="M20 19.500l7 7M27 19.500l-7 7" stroke="#fff" stroke-width="2"/></svg>
        <svg class="tx pen" viewBox="0 0 32 32" fill="none" stroke="#fff" stroke-width="2"><path d="M27 1l2 3-14 20-5 4 1-6zM14 20c-8-3-14 3-12 8 2 4 9 3 8-2M22 12c8-2 11 3 8 6-2 2-5 1-8 1"/></svg>
        <div class="lang">ENG<br>GA</div><div class="clock">17:54<br>11/01/2023</div>
        <svg class="note" viewBox="0 0 32 32" fill="none" stroke="#fff" stroke-width="2"><path d="M1 1h30v24H21l-5 5-5-5H1z"/></svg>
      </div>
    </div>
    <svg class="marks" viewBox="101 302 3200 1800"><g filter="url(#emboss)">
      <text x="434" y="732" textLength="932" lengthAdjust="spacingAndGlyphs">!customs-wareshussai@healthirl.net</text><text x="667" y="804" textLength="467" lengthAdjust="spacingAndGlyphs">2023/01/11 17:34</text>
      <text x="2034" y="732" textLength="932" lengthAdjust="spacingAndGlyphs">!customs-wareshussai@healthirl.net</text><text x="2266" y="804" textLength="467" lengthAdjust="spacingAndGlyphs">2023/01/11 17:34</text>
      <text x="1234" y="1180" textLength="932" lengthAdjust="spacingAndGlyphs">!customs-wareshussai@healthirl.net</text><text x="1466" y="1252" textLength="467" lengthAdjust="spacingAndGlyphs">2023/01/11 17:34</text>
      <text x="434" y="1628" textLength="932" lengthAdjust="spacingAndGlyphs">!customs-wareshussai@healthirl.net</text><text x="667" y="1700" textLength="467" lengthAdjust="spacingAndGlyphs">2023/01/11 17:34</text>
      <text x="2034" y="1628" textLength="932" lengthAdjust="spacingAndGlyphs">!customs-wareshussai@healthirl.net</text><text x="2266" y="1700" textLength="467" lengthAdjust="spacingAndGlyphs">2023/01/11 17:34</text>
    </g></svg>
  </section>
  </div>
  <div class="handle"><svg width="14" height="24" viewBox="0 0 14 24"><path d="M12 2L2 12l10 10" fill="none" stroke="#fff" stroke-width="3"/></svg></div>
</main>

<footer class="dock">
  <i class="o"><svg viewBox="0 0 32 32"><rect width="32" height="32" rx="7" fill="#2f9df0"/><path d="M18 0h7a7 7 0 0 1 7 7v18a7 7 0 0 1-7 7h-6c-1-5-1-8-1-12h-5C13 12 15 5 18 0z" fill="#e8eef5"/><path d="M9 10v4M23 10v4M6 22c5 6 15 6 20 0" fill="none" stroke="#1b3a5c" stroke-width="2"/></svg></i>
  <i><svg viewBox="0 0 32 32"><rect width="32" height="32" rx="7" fill="#a9a4a8"/><path d="M6 6h5v5H6zM6 20h5v5H6z" fill="#8ad04a"/><path d="M13 6h5v5h-5zM20 13h5v5h-5z" fill="#f0a03a"/><path d="M20 6h5v5h-5zM6 13h5v5H6z" fill="#e8504a"/><path d="M13 13h5v5h-5zM20 20h5v5h-5z" fill="#a05ad8"/><path d="M13 20h5v5h-5z" fill="#3f9bf0"/></svg></i>
  <i><svg viewBox="0 0 32 32"><rect width="32" height="32" rx="7" fill="#eee"/><circle cx="16" cy="16" r="13" fill="#2e8be8"/><path d="M25 7l-7 11-4-4z" fill="#ee4a3e"/><path d="M7 25l7-11 4 4z" fill="#fff"/></svg></i>
  <i><svg viewBox="0 0 32 32"><rect width="32" height="32" rx="7" fill="#55d262"/><path d="M16 6c7 0 11 4 11 9s-4 9-11 9c-2 0-3 0-4 0l-5 3 1-5c-2-2-3-4-3-7 0-5 4-9 11-9z" fill="#fff"/></svg></i>
  <i><svg viewBox="0 0 32 32"><rect width="32" height="32" rx="7" fill="#2e86ee"/><path d="M5 9h22v14H5z" fill="#fff"/><path d="M5 9l11 8 11-8M5 23l8-8M27 23l-8-8" fill="none" stroke="#9ab" stroke-width="1.300"/></svg></i>
  <i><svg viewBox="0 0 32 32"><rect width="32" height="32" rx="7" fill="#f3f3ee"/><path d="M7 0h6v18H7z" fill="#3f86f0"/><path d="M18 0h7a7 7 0 0 1 7 7v18L14 2z" fill="#7bd070"/><path d="M20 32l12-12v5a7 7 0 0 1-7 7z" fill="#f5d04a"/><path d="M0 10l7 6v12l-5 3-2-6z" fill="#e6a4c0"/><circle cx="13" cy="20" r="8" fill="#2e78e8" stroke="#fff"/><path d="M13 14l4 11-4-3-4 3z" fill="#fff"/></svg></i>
  <i><svg viewBox="0 0 32 32"><rect width="32" height="32" rx="7" fill="#fff"/><g opacity=".85"><ellipse cx="16" cy="9" rx="4" ry="6" fill="#f5952f"/><ellipse cx="22" cy="12" rx="5" ry="4.500" fill="#e8d23a"/><ellipse cx="23" cy="17" rx="6" ry="4" fill="#8bc34a"/><ellipse cx="21" cy="22" rx="4.500" ry="5" fill="#48b8a0"/><ellipse cx="16" cy="23" rx="4" ry="6" fill="#4a90e2"/><ellipse cx="11" cy="21" rx="5" ry="4.500" fill="#8a64c8"/><ellipse cx="9" cy="16" rx="6" ry="4" fill="#d0508f"/><ellipse cx="11" cy="11" rx="5" ry="5" fill="#ee5040"/></g></svg></i>
  <i><svg viewBox="0 0 32 32"><rect x="1" y="1" width="30" height="30" rx="7" fill="#1e1e1e" stroke="#bbb" stroke-width="2"/><path d="M6 8l4 3-4 3M11 15h5" fill="none" stroke="#eee" stroke-width="2"/></svg></i>
  <i><svg viewBox="0 0 32 32"><rect width="32" height="32" rx="7" fill="#52d060"/><rect x="5" y="10" width="15" height="12" rx="3" fill="#fff"/><path d="M21 14l6-4v12l-6-4z" fill="#fff"/></svg></i>
  <i><svg viewBox="0 0 32 32"><rect width="32" height="32" rx="7" fill="#fff"/><path d="M0 10V7a7 7 0 0 1 7-7h18a7 7 0 0 1 7 7v3z" fill="#ee4f45"/><text x="16" y="8.500" class="jan">JAN</text><text x="16" y="26.500" class="day">11</text></svg></i>
  <i><svg viewBox="0 0 32 32"><rect width="32" height="32" rx="7" fill="#a07a45"/><circle cx="16" cy="16" r="10" fill="#8d6835" stroke="#75552a"/><circle cx="16" cy="13" r="4" fill="#b08c55"/><path d="M9 23c2-6 12-6 14 0z" fill="#b08c55"/></svg></i>
  <i><svg viewBox="0 0 32 32"><rect width="32" height="32" rx="7" fill="#fff"/><path d="M12 8h14M12 16h14M12 24h14" stroke="#ccc" stroke-width="1.500"/><circle cx="6.500" cy="8" r="2.500" fill="#3f86f0"/><circle cx="6.500" cy="16" r="2.500" fill="#ee4f45"/><circle cx="6.500" cy="24" r="2.500" fill="#f0a03a"/></svg><em>1</em></i>
  <i><svg viewBox="0 0 32 32"><rect width="32" height="32" rx="7" fill="#f7f5ee"/><path d="M0 9V7a7 7 0 0 1 7-7h18a7 7 0 0 1 7 7v2z" fill="#f6c93e"/><path d="M5 16h22M5 22h22" stroke="#ccc" stroke-width="1.500"/></svg></i>
  <i><svg viewBox="0 0 32 32"><rect width="32" height="32" rx="7" fill="#1f2a28"/><svg x="3" y="10" width="11" height="11" fill="#fff"><use href="#apple"/></svg><text x="14" y="21" class="tv">tv</text></svg></i>
  <i><svg viewBox="0 0 32 32"><rect width="32" height="32" rx="7" fill="#f0425c"/><path d="M12 23V9l12-3v14" fill="none" stroke="#fff" stroke-width="2.500"/><circle cx="9.500" cy="23" r="3.500" fill="#fff"/><circle cx="21.500" cy="20.500" r="3.500" fill="#fff"/></svg></i>
  <i><svg viewBox="0 0 32 32"><rect width="32" height="32" rx="7" fill="#a04ad6"/><circle cx="16" cy="15" r="10" fill="none" stroke="#fff" stroke-width="2"/><circle cx="16" cy="15" r="5.500" fill="none" stroke="#fff" stroke-width="2"/><circle cx="16" cy="15" r="2.500" fill="#fff"/><path d="M14 19h4l-1 9h-2z" fill="#fff"/></svg></i>
  <i><svg viewBox="0 0 32 32"><rect width="32" height="32" rx="7" fill="#2e86ee"/><path d="M8 8h16l2 8H6z" fill="#e8f2ff"/><path d="M16 16v10M11 27h10" stroke="#fff" stroke-width="2"/></svg></i>
  <i><svg viewBox="0 0 32 32"><rect width="32" height="32" rx="7" fill="#6fd858"/><path d="M8 26v-7M13.500 26V15M19 26V10M24.500 26V6" stroke="#fff" stroke-width="3.500"/></svg></i>
  <i><svg viewBox="0 0 32 32"><rect width="32" height="32" rx="7" fill="#2a2a2c"/><path d="M27-3L18 15" stroke="#8a5a30" stroke-width="3"/><ellipse cx="15" cy="22" rx="8" ry="8" fill="#d9822b"/><circle cx="17" cy="17" r="4" fill="#e8a13f"/></svg></i>
  <i><svg viewBox="0 0 32 32"><rect width="32" height="32" rx="7" fill="#f39a3c"/><path d="M24 6L11 24" stroke="#fff" stroke-width="3.500"/><path d="M8 27h16" stroke="#fff" stroke-width="1.500"/></svg></i>
  <i><svg viewBox="0 0 32 32"><rect width="32" height="32" rx="7" fill="#2f8ff2"/><path d="M18 6L9 24M14 6l9 18M6 19h20" stroke="#fff" stroke-width="2.600"/></svg></i>
  <i><svg viewBox="0 0 32 32"><rect width="32" height="32" rx="7" fill="#9a9a9a"/><circle cx="16" cy="16" r="11.500" fill="#ccc" stroke="#333" stroke-width="3"/><circle cx="16" cy="16" r="6" fill="#777" stroke="#222" stroke-width="2"/><path d="M16 16h11M16 16L10 6M16 16l-6 10" stroke="#333" stroke-width="2"/></svg></i>
  <i class="o"><svg viewBox="0 0 32 32"><rect width="32" height="32" rx="7" fill="#fff"/><svg x="4" y="4" width="24" height="24"><use href="#chrome"/></svg></svg></i>
  <i class="o"><svg viewBox="0 0 32 32"><rect width="32" height="32" rx="7" fill="#52d060"/><path d="M6 26l2-6a10 10 0 1 1 4 4z" fill="none" stroke="#fff" stroke-width="2.500"/><path d="M12 11c0 6 4 9 9 10l1-4-3-1-2 1-3-3 1-2-1-3z" fill="#fff"/></svg><em>2</em></i>
  <i class="o"><svg viewBox="0 0 32 32"><path d="M2-2c8 0 20 0 28 0 3 20-1 28-14 34C3 26-1 18 2-2z" fill="#e6ecf4" stroke="#9ab" stroke-width="1.500"/><circle cx="16" cy="14" r="8" fill="none" stroke="#5a7ba8" stroke-width="3.500" stroke-dasharray="4 1.500"/></svg></i>
  <i class="o"><svg viewBox="0 0 32 32"><rect width="32" height="32" rx="7" fill="#fff"/><path d="M12 5h15v22H12z" fill="#3f8ae0"/><path d="M3 9h14v14H3z" fill="#1d56b0"/><path d="M6 13l2 7 2-5 2 5 2-7" fill="none" stroke="#fff" stroke-width="1.500"/></svg></i>
  <i class="o"><svg viewBox="0 0 32 32"><rect width="32" height="32" rx="7" fill="#fff"/><path d="M12 5h15v22H12z" fill="#37a866"/><path d="M3 9h14v14H3z" fill="#17713e"/><path d="M7 12l6 8M13 12l-6 8" stroke="#fff" stroke-width="1.800"/></svg></i>
  <i class="big"><svg viewBox="0 0 32 32"><rect width="32" height="32" rx="8" fill="#3b8df5"/><circle cx="16" cy="17" r="8.500" fill="none" stroke="#fff" stroke-width="2.500"/><circle cx="16" cy="8" r="3.500" fill="#fff"/><circle cx="9" cy="21" r="3.500" fill="#fff"/><circle cx="23" cy="21" r="3.500" fill="#fff"/></svg></i>
  <i class="o"><svg viewBox="0 0 32 32"><rect width="32" height="32" rx="7" fill="#4a4a4a"/><path d="M24 5v6L10 16v-5zM10 14l14 5v6l-14-5zM24 20v4L10 29v-5z" fill="#f59a2a"/></svg></i>
  <u></u>
  <i class="o"><svg viewBox="0 0 32 32"><rect width="32" height="32" rx="7" fill="#fff"/><path d="M10 4h12l5 6-4 13-7 6-7-6L5 10z" fill="#f0512b"/><path d="M10 11l4 2h4l4-2-2 7-4 5-4-5z" fill="#fff"/></svg></i>
  <i class="o big"><svg viewBox="0 0 32 32"><rect x="1" y="1" width="30" height="30" fill="#a3150f" stroke="#e04a3a" stroke-width="1.500" stroke-dasharray="2 2"/><path d="M8 26l4-19h10M9 16h9M17 15h9l-9 11h8" fill="none" stroke="#fff" stroke-width="3.500"/></svg></i>
  <i class="o big"><svg viewBox="0 0 32 32"><rect y="5" width="32" height="23" rx="7" fill="#ec2c22"/><path d="M12 10l10 6-10 6z" fill="#fff"/></svg></i>
  <i class="o"><svg viewBox="0 0 32 32"><rect width="32" height="32" rx="5" fill="#e8eef5"/><path d="M2 3h28v12H2z" fill="#8fb4e8"/><path d="M2 15h28v9H2z" fill="#3a5a80"/><circle cx="23" cy="23" r="8" fill="#222"/><circle cx="23" cy="23" r="4" fill="#555"/></svg></i>
  <u></u>
  <i><svg viewBox="0 0 32 32"><path d="M3-7h18l7 9v33H3z" fill="#f1f1ef"/><path d="M8 4h11M8 11h15M8 18h15M8 25h15" stroke="#aaa" stroke-width="1.500"/></svg></i>
  <i class="wide"><svg viewBox="0 0 36 32"><path d="M0 3h36v24H0z" fill="#d4cfe2"/><path d="M4 8h18v17H4z" fill="#fff"/><circle cx="29" cy="25" r="6" fill="#e6ecf4" stroke="#6a8ab5" stroke-width="2"/></svg></i>
  <i class="wide"><svg viewBox="0 0 36 32"><path d="M0 5h34v20H0z" fill="#27323c"/><path d="M4 10h8M4 14h14M4 18h8" stroke="#51606c"/><rect x="24" y="20" width="10" height="11" rx="2" fill="#4a4a4a"/><path d="M31 22l-4 3 4 1-4 3" stroke="#f59a2a" stroke-width="2" fill="none"/></svg></i>
  <i><svg viewBox="0 0 32 32"><path d="M4-4h24l-3 38H7z" fill="#6c7070"/><ellipse cx="16" cy="-3" rx="13" ry="4" fill="#c4c8c8"/><path d="M12 8l1 22M19 8l-1 22" stroke="#8b9090" stroke-width="1.500"/></svg></i>
</footer>
</body>
</html>
```
FILE: styles.css
```css
* { box-sizing: border-box; }
html, body { margin: 0; width: 3420px; height: 2224px; overflow: hidden; }
body {
  font-family: Inter, "Liberation Sans", sans-serif;
  position: relative;
  background:
    linear-gradient(180deg, #000 2160px, rgba(0, 0, 0, .6) 2182px, rgba(0, 0, 0, 0) 2224px),
    linear-gradient(105deg, #05101c 0, #05101c 1240px, #2c0820 1241px, #3a0a2c 1900px, #3a0a30 2700px, #4a1020 3150px, #802c16 3800px);
}
i, em { font-style: normal; }
svg { display: block; flex: none; }
svg:not([fill]) { fill: currentColor; }
.defs { position: absolute; }

/* menu bar */
.menubar {
  height: 84px; display: flex; color: #efecea; font-size: 26px; line-height: 32px; white-space: nowrap;
  background: linear-gradient(90deg, #3a302c 0, #372e2c 150px, #5a3a27 480px, #733f24 820px, #86421f 1100px, #913e1e 1440px, #963c1d 1700px, #8e351d 2000px, #7f2f1f 2230px, #6b2922 2500px, #4f2224 2900px, #361d25 3200px, #281a26 3420px);
}
.menubar span, .menubar b { text-shadow: 0 2px 5px rgba(0, 0, 0, .35); }
.apple { width: 31px; height: 31px; margin: 24px 0 0 37px; }
.menus { display: grid; grid-template-columns: 143px 83px 88px 100px 128px 176px 132px 84px 137px 841px; margin-left: 38px; padding-top: 25px; letter-spacing: -.3px; }
.menus b { letter-spacing: -.6px; }
.status { display: flex; align-items: center; height: 84px; }
.status > i { width: 72px; display: flex; justify-content: center; }
.status > i.dim { opacity: .3; }
.menubar .kbd { width: 44px; height: 32px; border-radius: 6px; background: #efebea; color: #5e2724; font-weight: 600; font-size: 24px; line-height: 32px; text-align: center; text-shadow: none; }
.pct { width: 84px; padding-left: 27px; font-size: 23px; letter-spacing: -.8px; }
.wifi { margin-left: 36px; }
.find { margin-left: 37px; }
.cc { margin-left: 36px; }
.date { margin: -2px 0 0 34px; width: 161px; letter-spacing: -.1px; }
.time { margin-top: -2px; letter-spacing: 0; }

/* window frame */
.behind { position: absolute; left: 3300px; top: 86px; width: 120px; height: 2074px; border-radius: 0 22px 22px 0; background: linear-gradient(180deg, #3a2a28 0 57px, #454b54 58px 119px, #1f2731 120px 100%); border-right: 2px solid #3c444e; }
.win { position: absolute; left: 0; top: 86px; width: 3402px; height: 2074px; border-radius: 20px; overflow: hidden; background: #808080; border: 2px solid #77787a; border-width: 2px 1px 2px 1px; box-shadow: 0 0 0 2px #000; display: flex; flex-direction: column; }
.tabs { height: 82px; background: #202124; display: flex; padding-top: 14px; flex: none; color: #f4f4f5; }
.lights { width: 185px; display: flex; gap: 16px; padding: 15px 0 0 41px; }
.lights i { width: 24px; height: 24px; border-radius: 50%; }
.lights .r { background: #ed6a5f; }
.lights .y { background: #f5bf4f; }
.lights .g { background: #62c655; }
.tab { width: 330px; height: 68px; display: flex; align-items: center; padding-left: 24px; font-size: 24px; letter-spacing: -.3px; position: relative; }
.tab .fav { width: 32px; height: 32px; }
.tab span { width: 200px; margin-left: 16px; overflow: hidden; white-space: nowrap; -webkit-mask-image: linear-gradient(90deg, #000 165px, transparent 200px); mask-image: linear-gradient(90deg, #000 165px, transparent 200px); }
.tab .x { width: 17px; height: 17px; margin-left: 20px; }
.tab:not(.on)::after { content: ""; position: absolute; right: -1px; top: 15px; width: 2px; height: 40px; background: #5a5c60; }
.tab.on { background: #35363a; border-radius: 16px 16px 0 0; }
.tab.on::before, .tab.on::after { content: ""; position: absolute; bottom: 0; width: 16px; height: 16px; }
.tab.on::before { left: -16px; background: radial-gradient(circle at 0 0, transparent 16px, #35363a 16.500px); }
.tab.on::after { right: -16px; background: radial-gradient(circle at 100% 0, transparent 16px, #35363a 16.500px); }
.newtab { width: 24px; height: 24px; margin: 22px 0 0 34px; }
.tabmenu { width: 20px; height: 12px; margin: 29px 0 0 134px; }
.tools { height: 74px; flex: none; background: #35363a; border-bottom: 2px solid #5b5c5e; display: flex; align-items: center; color: #f1f1f1; }
.nav { display: flex; gap: 24px; }
.nav svg { width: 40px; height: 40px; }
.nav .off { opacity: .45; }
.tools .nav { width: 215px; padding-left: 23px; }
.omni { width: 2714px; height: 56px; border-radius: 28px; background: #202124; display: flex; align-items: center; }
.lock { width: 24px; height: 24px; margin-left: 24px; color: #9aa0a6; }
.url { margin-left: 20px; font-size: 28px; letter-spacing: -.2px; flex: 1; color: #fff; }
.url em { color: #8c8e91; letter-spacing: .12px; }
.omni-i { display: flex; align-items: center; color: #c4c4c4; padding-right: 4px; }
.omni-i i, .exts i { width: 64px; display: flex; justify-content: center; }
.exts { display: flex; align-items: center; margin-left: 12px; }
.me { width: 44px; height: 44px; border-radius: 50%; background: #b02a5b; font-weight: 400; font-size: 24px; line-height: 44px; text-align: center; }
.stage { flex: 1; padding: 58px 0 0 100px; background: #808080; }
.handle { position: absolute; left: 3363px; top: 1065px; width: 100px; height: 100px; border-radius: 50%; background: #3c4043; display: flex; align-items: center; padding-left: 24px; box-shadow: 0 2px 8px rgba(0, 0, 0, .4); }

/* remote desktop */
.remote { position: relative; width: 3200px; height: 1800px; box-shadow: 0 8px 34px 4px rgba(0, 0, 0, .42); display: flex; flex-direction: column; background: #525659; font-family: "Open Sans", "Noto Sans", sans-serif; }
.rtabs { height: 68px; background: #dee1e6; display: flex; align-items: center; padding-left: 17px; flex: none; color: #3c4043; }
.rtab { width: 102px; flex: none; height: 40px; display: flex; align-items: center; padding-left: 15px; border-right: 2px solid #8b8e93; font-size: 24px; }
.rtab.nosep { border-color: transparent; }
.rtab svg { width: 32px; height: 32px; }
.rtab span { width: 22px; margin-left: 15px; overflow: hidden; white-space: nowrap; color: #55585c; letter-spacing: -.6px; }
.rtab.later { margin-left: 1323px; }
.rtab .gi { width: 28px; height: 28px; margin: 0 2px; }
.rtab.cur { height: 68px; background: #fff; border: 0; border-radius: 14px 14px 0 0; }
.rtab.cur .cx { width: 17px; height: 17px; margin-left: 14px; }
.rtab.last { width: 98px; padding-left: 13px; }
.gb { fill: #5f6368; }
.gl { fill: #e4e6ea; }
.or { color: #ee7d2b; }
.gr { color: #999; }
.xb { fill: currentColor; }
.pma { font: italic bold 13px "Liberation Sans", sans-serif; fill: #3b3b6b; }
.rplus { width: 24px; height: 24px; margin-left: 33px; }
.wbtns { margin-left: auto; display: flex; align-items: center; color: #000; padding-bottom: 7px; }
.wbtns i { width: 92px; display: flex; justify-content: center; }
.dash { width: 20px; height: 2px; background: #000; }
.conn { position: absolute; left: 885px; top: 0; width: 1430px; height: 66px; color: #fff; display: flex; }
.conn-bg { position: absolute; inset: 0; width: 1430px; height: 66px; }
.conn > :not(.conn-bg) { position: relative; }
.pin { margin-left: 93px; width: 56px; height: 54px; background: rgba(40, 110, 220, .3); border: 2px solid rgba(70, 130, 230, .45); border-top: 0; display: flex; padding: 16px 0 0 14px; }
.sig { margin: 12px 0 0 14px; }
.conn span { width: 540px; margin-left: 446px; font-size: 28px; line-height: 62px; letter-spacing: -.45px; }
.conn-b { display: flex; padding-top: 14px; }
.conn-b b { width: 22px; height: 6px; background: #fff; margin: 24px 34px 0 0; }
.conn-b svg:last-child { margin: 4px 0 0 30px; }
.rtools { height: 74px; background: #fff; border-bottom: 2px solid #dadce0; display: flex; align-items: center; flex: none; color: #5f6368; }
.rtools .nav { width: 216px; padding-left: 23px; gap: 22px; }
.rtools .nav svg { width: 42px; height: 42px; }
.romni { width: 2766px; height: 56px; border-radius: 28px; background: #f1f3f3; display: flex; align-items: center; }
.info { width: 28px; height: 28px; margin-left: 22px; }
.romni span { margin-left: 18px; flex: 1; font-size: 28px; letter-spacing: -.72px; color: #202124; }
.romni em { color: #6b6f74; }
.rshare { width: 30px; height: 28px; }
.rstar { width: 34px; height: 34px; margin: 0 17px 0 32px; }
.rside { width: 28px; height: 28px; margin-left: 32px; }
.ruser { width: 44px; height: 44px; margin-left: 28px; }
.rdots { width: 8px; height: 26px; margin-left: 39px; }

.pdfbar { height: 112px; background: #323639; flex: none; display: flex; align-items: center; font-family: Roboto, sans-serif; font-size: 27px; color: #f1f1f1; position: relative; z-index: 1; box-shadow: 0 0 10px rgba(0, 0, 0, .4); }
.burger { width: 32px; margin-left: 52px; display: flex; flex-direction: column; gap: 6px; }
.burger i { height: 4px; background: #fff; }
.ptitle { width: 1172px; margin-left: 52px; font-size: 28px; font-weight: 700; letter-spacing: -.17px; white-space: nowrap; }
.pbox { background: #191b1c; height: 40px; line-height: 40px; text-align: center; }
.pnum { width: 48px; font-size: 25px; }
.pof { width: 28px; padding-left: 8px; }
.ptot { width: 69px; padding-left: 2px; font-size: 25px; }
.psep { width: 2px; height: 30px; background: #5f6265; }
.pminus { width: 25px; height: 4px; background: #c9cacb; margin: 0 32px; }
.pzoom { width: 90px; font-weight: 500; font-size: 26px; }
.pplus { width: 24px; height: 24px; margin: 0 32px; color: #dcdcdc; }
.pfit { width: 36px; height: 32px; margin-left: 42px; }
.prot { width: 36px; height: 34px; margin-left: 35px; }
.pact { margin-left: auto; display: flex; align-items: center; padding-right: 64px; }
.pact svg { margin-left: 51px; }
.pact svg:last-child { margin-left: 59px; }
.pdf { height: 1466px; display: flex; background: #525659; overflow: hidden; }
.side { width: 600px; background: #323639; display: flex; flex-direction: column; align-items: center; padding-top: 36px; font: 25px/30px Roboto, sans-serif; color: #fff; }
.thumb { width: 240px; height: 328px; border: 12px solid #8ab4f8; }
.side span { margin-top: 11px; }
.view { width: 2566px; padding: 6px 0 0 490px; }
.page { width: 1586px; height: 1500px; background: #fff; color: #000; box-shadow: 0 0 10px rgba(0, 0, 0, .5); padding: 28px 0 0 76px; font: 24px/28px "Liberation Serif", serif; }
.pageno { margin: 0 0 23px -50px; font: bold 26px/30px "Liberation Sans", sans-serif; white-space: pre; letter-spacing: .15px; }
.top { display: flex; justify-content: space-between; height: 147px; padding-right: 106px; }
h1 { margin: 51px 0 0; font-size: 36px; line-height: 40px; }
.hse { width: 210px; height: 147px; }
.info2 { margin-top: 33px; height: 147px; display: flex; justify-content: space-between; padding-right: 99px; }
.pt, .hosp { display: flex; flex-direction: column; }
.pt h2 { margin: 0; font-size: 28px; line-height: 35px; }
.hosp { text-align: right; padding-top: 5px; letter-spacing: -.02px; }
.hosp .first { line-height: 29px; padding-bottom: 1px; }
.row { display: grid; grid-template-columns: 142px 219px 148px 126px 154px 114px 168px 145px 220px; width: 1436px; text-align: center; white-space: nowrap; }
.head { margin-top: 68px; height: 50px; line-height: 48px; background: #3c80e3; color: #fff; }
.head b:nth-child(3) { text-align: left; padding-left: 30px; }
.head b:last-child { padding-left: 4px; }
.rows { padding: 5px 0 16px; }
.rows .row { height: 63.500px; line-height: 65px; }
.rows span:first-child { text-align: left; padding-left: 2px; }
.rows span:nth-child(2) { text-align: left; padding-left: 41px; }
.rows span:nth-child(3) { text-align: left; padding-left: 30px; }
.rows span:nth-child(7) { display: flex; align-items: center; justify-content: center; }
.flag { width: 78px; height: 50px; background: #ec3a25; color: #fff; font: 24px/51px "Liberation Sans", sans-serif; }
hr { margin: 0; width: 1434px; height: 6px; border: 0; background: #5d5d5d; border-top: 2px solid #c9c9c9; }
.addl { display: block; margin-top: 34px; font-size: 20px; line-height: 25px; }
.sbar { width: 34px; background: #f1f1f1; display: flex; flex-direction: column; align-items: center; padding: 14px 0 12px; }
.sbar svg { width: 14px; height: 8px; }
.sbar i { width: 26px; height: 908px; margin: 12px 0 auto; background: #c1c1c1; }

.taskbar { height: 80px; background: #101010; display: flex; color: #fff; }
.taskbar > i { width: 98px; height: 80px; flex: none; display: flex; align-items: center; justify-content: center; }
.taskbar > i.w { width: 96.500px; }
.taskbar > i.w:first-child { width: 95px; }
.taskbar > i.w:nth-child(3) { width: 101px; padding-right: 4px; }
.taskbar > i.run { background: linear-gradient(#79aee6, #79aee6) 50% 100% / 80px 4px no-repeat; }
.taskbar > i.two { background: linear-gradient(90deg, #79aee6 62px, #4f7195 62px) 50% 100% / 80px 4px no-repeat; }
.taskbar > i.act { background: linear-gradient(#79aee6, #79aee6) 50% 100% / 96px 4px no-repeat, linear-gradient(#4c4d4c, #4c4d4c) 50% 0 / 96px 80px no-repeat; }
.wl { font: bold 12px "Liberation Sans", sans-serif; fill: #2a5ca0; text-anchor: end; }
.tray { margin-left: auto; display: flex; align-items: center; border-right: 2px solid #666; margin-right: 8px; font-size: 23px; line-height: 35px; letter-spacing: -1px; text-align: center; }
.up { width: 24px; height: 14px; margin-right: 20px; transform: rotate(180deg); }
.tx { width: 32px; height: 32px; margin-right: 16px; }
.tx.last { margin-right: 15px; }
.tx.pen { margin: 0 0 0 8px; }
.lang { width: 74px; margin-left: 14px; }
.clock { width: 140px; }
.note { width: 32px; height: 32px; margin: 0 41px 0 24px; }
.marks { position: absolute; left: 0; top: 0; width: 3200px; height: 1800px; z-index: 2; }
.marks text { font: 58px "Noto Sans", sans-serif; fill: #fff; }

/* dock */
.dock { position: absolute; left: 1025px; top: 2162px; width: 1371px; height: 53px; border-radius: 14px; border: 2px solid #5b444b; background: linear-gradient(90deg, #2f1a22, #2f1a1c 30%, #331a24); display: flex; padding-top: 7px; justify-content: center; }
.dock i { width: 36.100px; height: 44px; position: relative; display: flex; justify-content: center; }
.dock i > svg { width: 26px; height: 26px; overflow: visible; }
.dock .big > svg { width: 32px; height: 32px; margin-top: -3px; }
.dock .wide > svg { width: 32px; height: 28px; }
.dock .o::after { content: ""; position: absolute; left: 15px; top: 33px; width: 6px; height: 6px; border-radius: 50%; background: #b39aa3; }
.dock em { position: absolute; right: 1px; top: -4px; width: 12px; height: 12px; border-radius: 50%; background: #e5483d; color: #fff; font-size: 9px; line-height: 12px; text-align: center; }
.dock u { width: 2px; height: 36px; margin: 0 7px 0 9px; background: #5f4a50; }
.jan { font: 8px Inter, sans-serif; fill: #fff; text-anchor: middle; }
.day { font: 17px Inter, sans-serif; fill: #222; text-anchor: middle; }
.tv { font: 600 13px Inter, sans-serif; fill: #fff; }
```
